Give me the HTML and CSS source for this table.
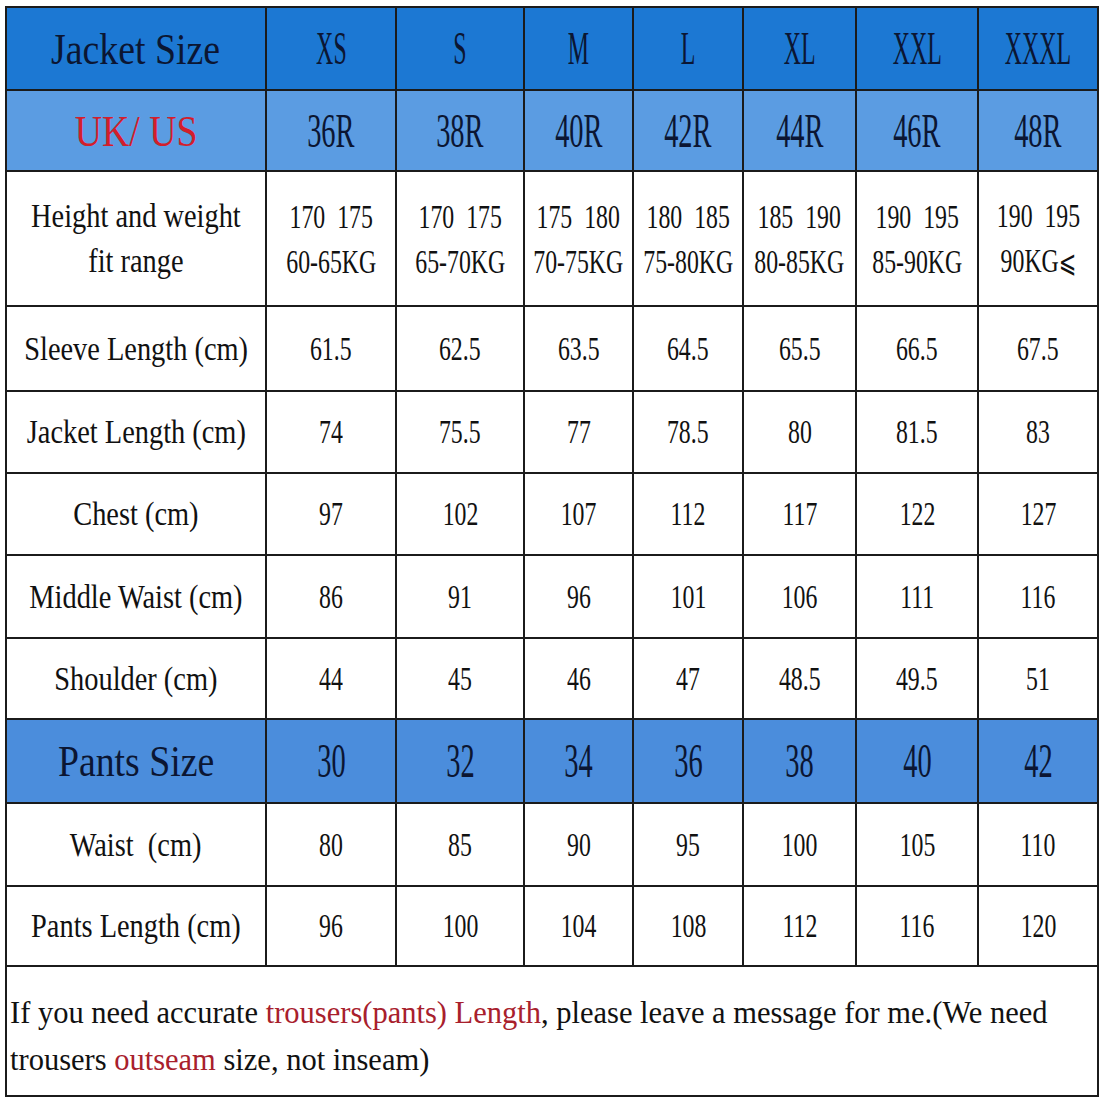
FILE: index.html
```html
<!DOCTYPE html>
<html lang="en">
<head>
<meta charset="utf-8">
<title>Size Chart</title>
<link rel="stylesheet" href="styles.css">
</head>
<body>
<div class="sheet">
<table class="chart">
  <colgroup>
    <col class="c-label"><col class="c-xs"><col class="c-s"><col class="c-m"><col class="c-l"><col class="c-xl"><col class="c-xxl"><col class="c-xxxl">
  </colgroup>
  <tr class="row-head">
    <th><span class="t head-label">Jacket Size</span></th>
    <th><span class="t head-size">XS</span></th>
    <th><span class="t head-size">S</span></th>
    <th><span class="t head-size">M</span></th>
    <th><span class="t head-size">L</span></th>
    <th><span class="t head-size">XL</span></th>
    <th><span class="t head-size">XXL</span></th>
    <th><span class="t head-size">XXXL</span></th>
  </tr>
  <tr class="row-uk">
    <th><span class="t head-label red">UK/ US</span></th>
    <td><span class="t head-num">36R</span></td>
    <td><span class="t head-num">38R</span></td>
    <td><span class="t head-num">40R</span></td>
    <td><span class="t head-num">42R</span></td>
    <td><span class="t head-num">44R</span></td>
    <td><span class="t head-num">46R</span></td>
    <td><span class="t head-num">48R</span></td>
  </tr>
  <tr class="row-fit">
    <th><span class="t body-label two">Height and weight<br>fit range</span></th>
    <td><span class="t body-num two">170&nbsp;&nbsp;175<br>60-65KG</span></td>
    <td><span class="t body-num two">170&nbsp;&nbsp;175<br>65-70KG</span></td>
    <td><span class="t body-num two">175&nbsp;&nbsp;180<br>70-75KG</span></td>
    <td><span class="t body-num two">180&nbsp;&nbsp;185<br>75-80KG</span></td>
    <td><span class="t body-num two">185&nbsp;&nbsp;190<br>80-85KG</span></td>
    <td><span class="t body-num two">190&nbsp;&nbsp;195<br>85-90KG</span></td>
    <td><span class="t body-num two">190&nbsp;&nbsp;195<br>90KG<span class="leq">⩽</span></span></td>
  </tr>
  <tr class="row-85">
    <th><span class="t body-label">Sleeve Length (cm)</span></th>
    <td><span class="t body-num">61.5</span></td>
    <td><span class="t body-num">62.5</span></td>
    <td><span class="t body-num">63.5</span></td>
    <td><span class="t body-num">64.5</span></td>
    <td><span class="t body-num">65.5</span></td>
    <td><span class="t body-num">66.5</span></td>
    <td><span class="t body-num">67.5</span></td>
  </tr>
  <tr class="row-82">
    <th><span class="t body-label">Jacket Length (cm)</span></th>
    <td><span class="t body-num">74</span></td>
    <td><span class="t body-num">75.5</span></td>
    <td><span class="t body-num">77</span></td>
    <td><span class="t body-num">78.5</span></td>
    <td><span class="t body-num">80</span></td>
    <td><span class="t body-num">81.5</span></td>
    <td><span class="t body-num">83</span></td>
  </tr>
  <tr class="row-82">
    <th><span class="t body-label">Chest (cm)</span></th>
    <td><span class="t body-num">97</span></td>
    <td><span class="t body-num">102</span></td>
    <td><span class="t body-num">107</span></td>
    <td><span class="t body-num">112</span></td>
    <td><span class="t body-num">117</span></td>
    <td><span class="t body-num">122</span></td>
    <td><span class="t body-num">127</span></td>
  </tr>
  <tr class="row-83">
    <th><span class="t body-label">Middle Waist (cm)</span></th>
    <td><span class="t body-num">86</span></td>
    <td><span class="t body-num">91</span></td>
    <td><span class="t body-num">96</span></td>
    <td><span class="t body-num">101</span></td>
    <td><span class="t body-num">106</span></td>
    <td><span class="t body-num">111</span></td>
    <td><span class="t body-num">116</span></td>
  </tr>
  <tr class="row-81">
    <th><span class="t body-label">Shoulder (cm)</span></th>
    <td><span class="t body-num">44</span></td>
    <td><span class="t body-num">45</span></td>
    <td><span class="t body-num">46</span></td>
    <td><span class="t body-num">47</span></td>
    <td><span class="t body-num">48.5</span></td>
    <td><span class="t body-num">49.5</span></td>
    <td><span class="t body-num">51</span></td>
  </tr>
  <tr class="row-pants">
    <th><span class="t head-label">Pants Size</span></th>
    <td><span class="t head-num">30</span></td>
    <td><span class="t head-num">32</span></td>
    <td><span class="t head-num">34</span></td>
    <td><span class="t head-num">36</span></td>
    <td><span class="t head-num">38</span></td>
    <td><span class="t head-num">40</span></td>
    <td><span class="t head-num">42</span></td>
  </tr>
  <tr class="row-83">
    <th><span class="t body-label">Waist&nbsp; (cm)</span></th>
    <td><span class="t body-num">80</span></td>
    <td><span class="t body-num">85</span></td>
    <td><span class="t body-num">90</span></td>
    <td><span class="t body-num">95</span></td>
    <td><span class="t body-num">100</span></td>
    <td><span class="t body-num">105</span></td>
    <td><span class="t body-num">110</span></td>
  </tr>
  <tr class="row-80">
    <th><span class="t body-label">Pants Length (cm)</span></th>
    <td><span class="t body-num">96</span></td>
    <td><span class="t body-num">100</span></td>
    <td><span class="t body-num">104</span></td>
    <td><span class="t body-num">108</span></td>
    <td><span class="t body-num">112</span></td>
    <td><span class="t body-num">116</span></td>
    <td><span class="t body-num">120</span></td>
  </tr>
  <tr class="row-note">
    <td colspan="8" class="note">
      <p class="note-line">If you need accurate <span class="red-dark">trousers(pants) Length</span>, please leave a message for me.(We need</p>
      <p class="note-line">trousers <span class="red-dark">outseam</span> size, not inseam)</p>
    </td>
  </tr>
</table>
</div>
</body>
</html>
```

FILE: styles.css
```css
html, body {
  margin: 0;
  padding: 0;
  background: #ffffff;
}

.sheet {
  padding: 6px 3px 0 5px;
}

.chart {
  width: 1092px;
  table-layout: fixed;
  border-collapse: collapse;
  font-family: "Liberation Serif", "DejaVu Serif", serif;
  color: #111111;
}

.c-label { width: 260px; }
.c-xs { width: 130px; }
.c-s { width: 128px; }
.c-m { width: 109px; }
.c-l { width: 110px; }
.c-xl { width: 113px; }
.c-xxl { width: 122px; }
.c-xxxl { width: 120px; }

.chart th,
.chart td {
  border: 2px solid #1b1b1b;
  padding: 0;
  text-align: center;
  vertical-align: middle;
  font-weight: normal;
  white-space: nowrap;
  overflow: visible;
}

.row-head th { height: 81px; background: #1c78d3; color: #0b1633; }
.row-uk th, .row-uk td { height: 79px; background: #5b9ce2; color: #0b1633; }
.row-fit th, .row-fit td { height: 133px; }
.row-85 th, .row-85 td { height: 83px; }
.row-82 th, .row-82 td { height: 80px; }
.row-83 th, .row-83 td { height: 81px; }
.row-81 th, .row-81 td { height: 79px; }
.row-80 th, .row-80 td { height: 78px; }
.row-pants th, .row-pants td { height: 82px; background: #4b8ddc; color: #0b1633; }
.row-note td { height: 116px; }

.t {
  display: inline-block;
  margin: 0 -60px;
  transform-origin: center center;
}

.head-label {
  font-size: 45px;
  line-height: 50px;
  transform: scaleX(0.84);
}

.head-size {
  font-size: 46px;
  line-height: 50px;
  transform: scaleX(0.52);
}

.head-num {
  font-size: 49px;
  line-height: 50px;
  transform: scaleX(0.58);
}

.body-label {
  font-size: 33px;
  line-height: 40px;
  transform: scaleX(0.86);
}

.body-num {
  font-size: 34px;
  line-height: 40px;
  transform: scaleX(0.7);
}

.two {
  line-height: 45px;
}

.leq {
  font-family: "DejaVu Sans", sans-serif;
  font-size: 30px;
}

.red {
  color: #d21e2c;
}

.note {
  text-align: left !important;
  padding: 12px 0 0 3px !important;
}

.note-line {
  margin: 0;
  font-size: 30.5px;
  line-height: 47px;
  white-space: nowrap;
  color: #111111;
}

.red-dark {
  color: #a8202c;
}
```
